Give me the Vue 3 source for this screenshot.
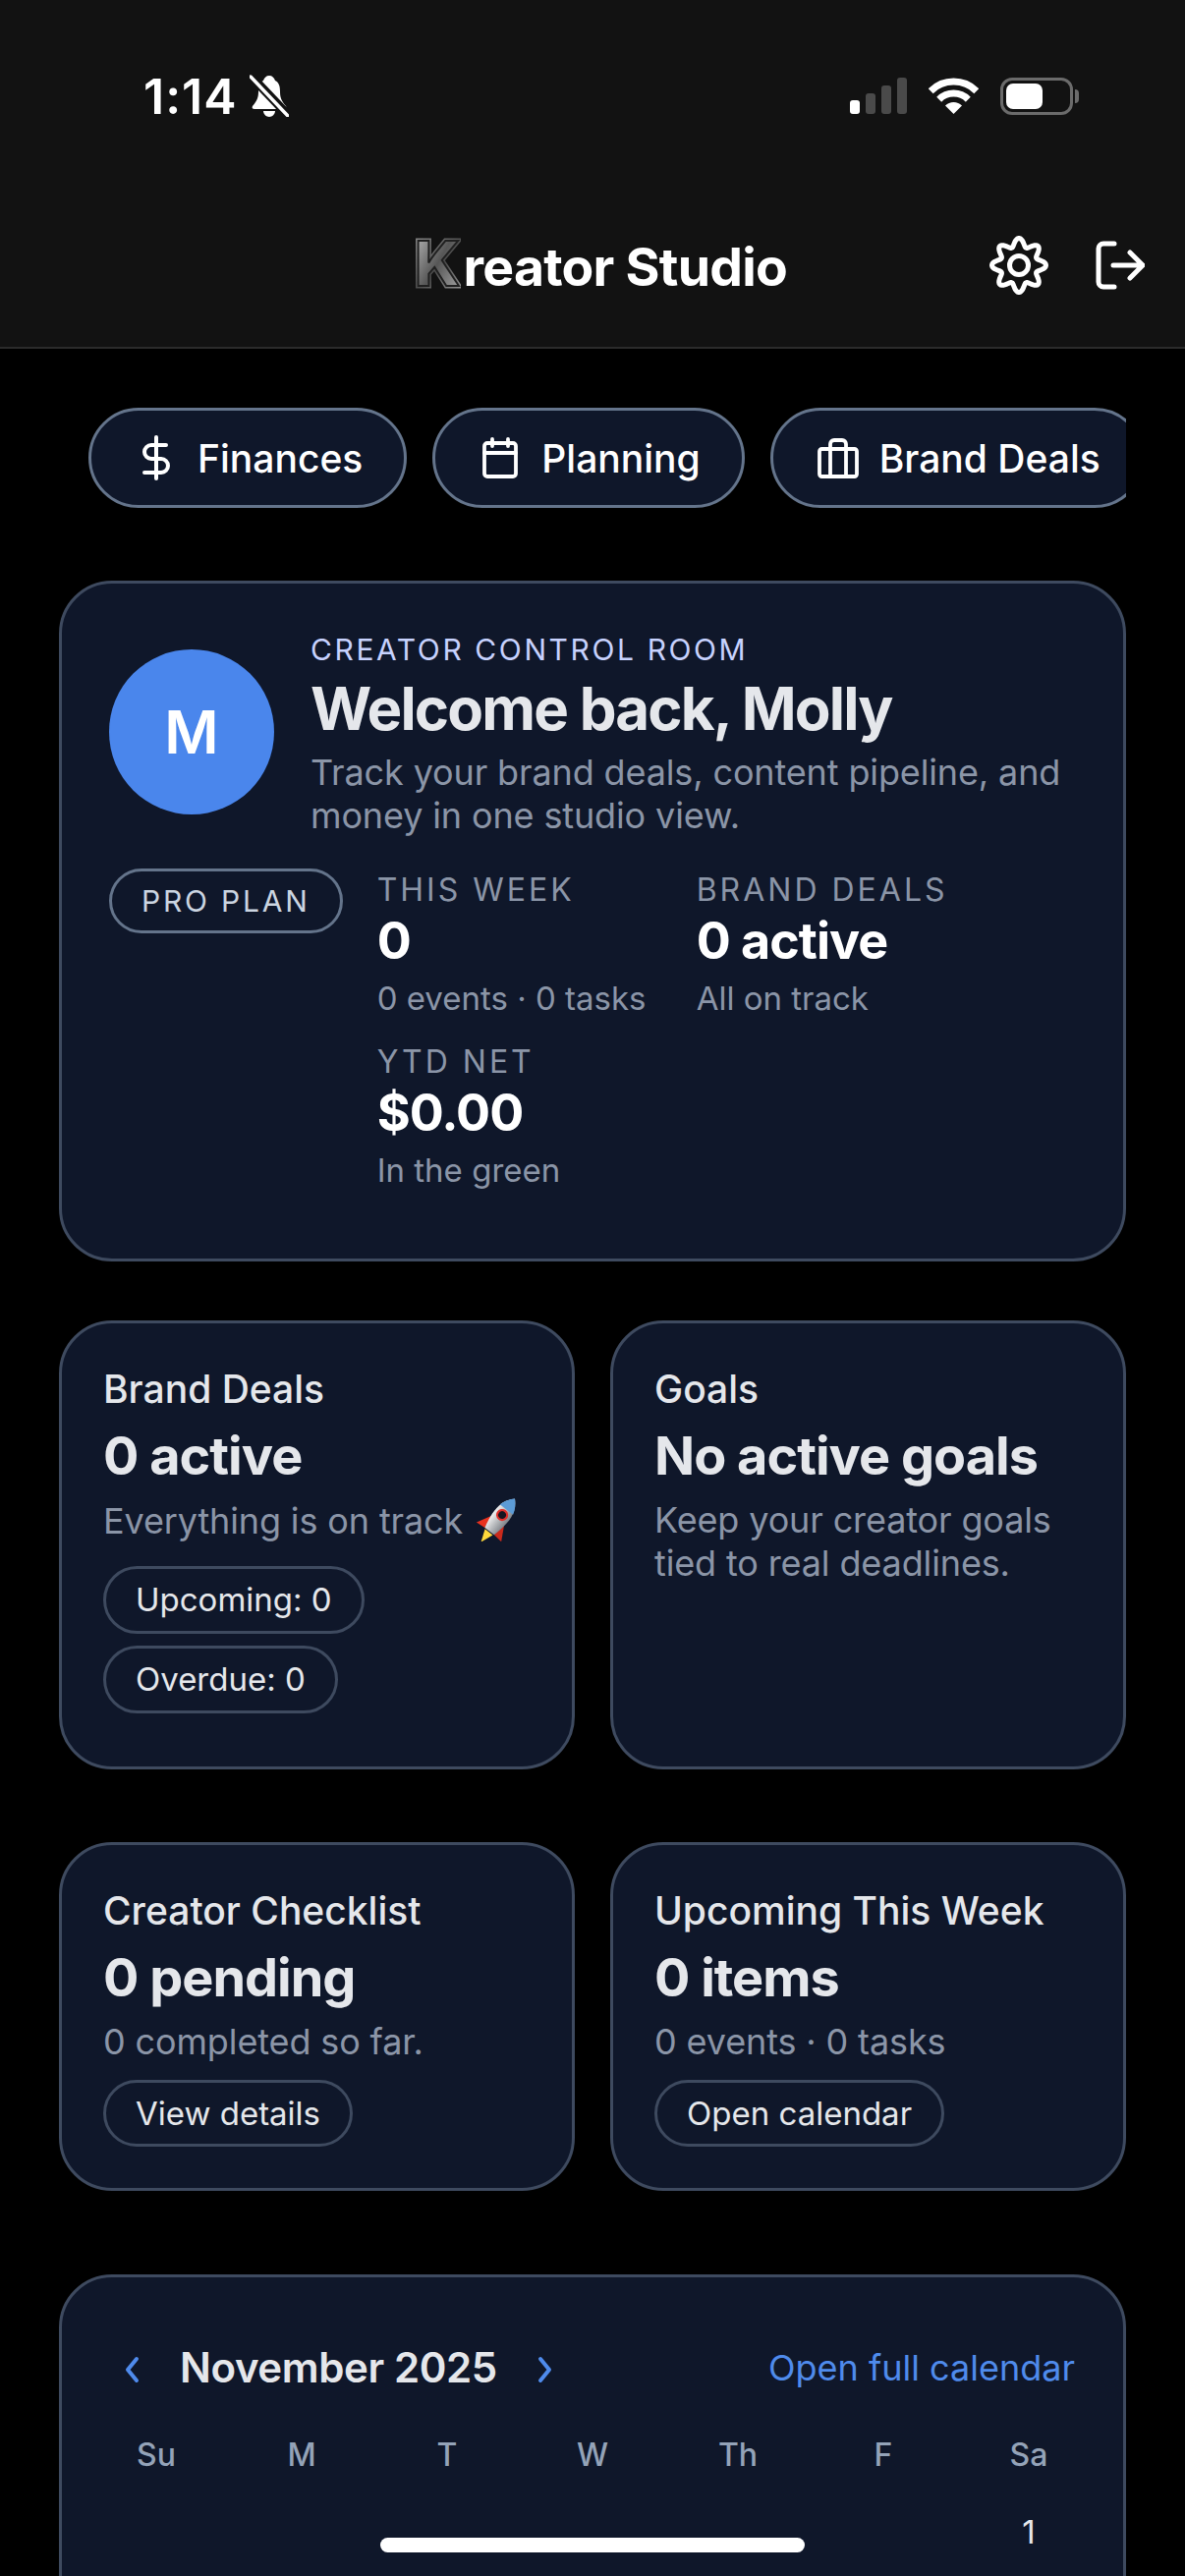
<script setup>
const tiles = [
  [
    { title: 'Brand Deals', value: '0 active', sub: 'Everything is on track', rocket: true, chips: ['Upcoming: 0', 'Overdue: 0'] },
    { title: 'Goals', value: 'No active goals', sub: 'Keep your creator goals tied to real deadlines.', chips: [] },
  ],
  [
    { title: 'Creator Checklist', value: '0 pending', sub: '0 completed so far.', link: 'View details' },
    { title: 'Upcoming This Week', value: '0 items', sub: '0 events · 0 tasks', link: 'Open calendar' },
  ],
];

const stats = [
  { label: 'THIS WEEK', value: '0', sub: '0 events · 0 tasks' },
  { label: 'BRAND DEALS', value: '0 active', sub: 'All on track' },
  { label: 'YTD NET', value: '$0.00', sub: 'In the green' },
];

const weekdays = ['Su', 'M', 'T', 'W', 'Th', 'F', 'Sa'];
// only the first week fits above the fold
const days = ['', '', '', '', '', '', 1];

// wavy outline for the settings cog
const gearPath = (() => {
  const pts = [];
  for (let i = 0; i < 160; i++) {
    const a = (i / 160) * Math.PI * 2;
    const r = 23.3 + 4.2 * Math.cos(8 * a);
    pts.push(`${(30 + r * Math.sin(a)).toFixed(2)} ${(30 - r * Math.cos(a)).toFixed(2)}`);
  }
  return `M${pts.join('L')}Z`;
})();
</script>

<template>
  <div class="screen">
    <header class="top">
      <div class="status">
        <div class="status-left">
          <span class="time">1:14</span>
          <svg class="bell" width="40" height="43" viewBox="0 0 40 43">
            <path d="M20 1c3 0 5 2 6 5 4 2 5 6 5 11 0 6 1 9 6 15 1 2 0 3-2 3H5c-2 0-3-1-2-3 5-6 6-9 6-15 0-5 1-9 5-11 1-3 3-5 6-5z" fill="#fff" />
            <path d="M14 37h12c0 3-3 6-6 6s-6-3-6-6z" fill="#fff" />
            <path d="M1 1l38 40" stroke="#121212" stroke-width="9" />
            <path d="M1 2l38 40" stroke="#fff" stroke-width="3.5" stroke-linecap="round" />
          </svg>
        </div>
        <div class="status-right">
          <div class="signal">
            <i class="on"></i><i></i><i></i><i></i>
          </div>
          <svg width="51" height="37" viewBox="0 0 51 37" fill="none">
            <path d="M2.2 13.7A33 33 0 0 1 48.8 13.7" stroke="#fff" stroke-width="7" />
            <path d="M10.7 22.2A21 21 0 0 1 40.3 22.2" stroke="#fff" stroke-width="7" />
            <path d="M25.5 37L17 28.5A12 12 0 0 1 34 28.5Z" fill="#fff" />
          </svg>
          <div class="battery"><span></span></div>
        </div>
      </div>
      <div class="brand-row">
        <h1 class="brand"><span class="logo-k" data-k="K">K</span>reator Studio</h1>
        <div class="actions">
          <svg width="60" height="60" viewBox="0 0 60 60" fill="none" stroke="#fff" stroke-width="5">
            <path :d="gearPath" stroke-linejoin="round" />
            <circle cx="30" cy="30" r="9.5" />
          </svg>
          <svg width="50" height="50" viewBox="0 0 50 50" fill="none" stroke="#fff" stroke-width="5" stroke-linecap="round" stroke-linejoin="round">
            <path d="M19 3H8a5 5 0 0 0-5 5v34a5 5 0 0 0 5 5h11" />
            <path d="M18 25h30M35 12l13 13-13 13" />
          </svg>
        </div>
      </div>
    </header>

    <main class="page">
      <nav class="pills">
        <a class="pill">
          <svg width="48" height="48" viewBox="0 0 24 24" fill="none" stroke="#fff" stroke-width="2" stroke-linecap="round" stroke-linejoin="round">
            <path d="M12 1.5v21M17 5.5H9.5a3.5 3.5 0 0 0 0 7h5a3.5 3.5 0 0 1 0 7H6" />
          </svg>
          Finances
        </a>
        <a class="pill">
          <svg width="48" height="48" viewBox="0 0 24 24" fill="none" stroke="#fff" stroke-width="1.9" stroke-linecap="round" stroke-linejoin="round">
            <rect x="4" y="4.5" width="16" height="17" rx="1.5" />
            <path d="M4 9.5h16M8 2.5v3.5M16 2.5v3.5" />
          </svg>
          Planning
        </a>
        <a class="pill">
          <svg width="48" height="48" viewBox="0 0 24 24" fill="none" stroke="#fff" stroke-width="1.9" stroke-linecap="round" stroke-linejoin="round">
            <rect x="2.5" y="7.5" width="19" height="14" rx="1.2" />
            <path d="M8 21.5V5a2 2 0 0 1 2-2h4a2 2 0 0 1 2 2v16.5" />
          </svg>
          Brand Deals
        </a>
      </nav>

      <section class="card hero">
        <div class="hero-top">
          <div class="avatar">M</div>
          <div class="hero-text">
            <div class="eyebrow">CREATOR CONTROL ROOM</div>
            <h2>Welcome back, Molly</h2>
            <p>Track your brand deals, content pipeline, and money in one studio view.</p>
          </div>
        </div>
        <div class="hero-bottom">
          <span class="plan">PRO PLAN</span>
          <div class="stats">
            <div v-for="s in stats" :key="s.label" class="stat">
              <div class="stat-label">{{ s.label }}</div>
              <div class="stat-value">{{ s.value }}</div>
              <div class="stat-sub">{{ s.sub }}</div>
            </div>
          </div>
        </div>
      </section>

      <section v-for="(row, i) in tiles" :key="i" class="tiles" :class="'tiles-' + i">
        <article v-for="t in row" :key="t.title" class="card tile">
          <div class="tile-title">{{ t.title }}</div>
          <div class="tile-value">{{ t.value }}</div>
          <p class="tile-sub">
            {{ t.sub }}
            <svg v-if="t.rocket" class="rocket" width="46" height="44" viewBox="0 0 46 44">
              <defs>
                <linearGradient id="rocketBody" x1="0" x2="1" y1="0" y2="0">
                  <stop offset="0" stop-color="#f2f2f2" />
                  <stop offset="1" stop-color="#7d8288" />
                </linearGradient>
              </defs>
              <g transform="translate(25 21) rotate(38)">
                <path d="M-5 17L0 30 5 17Z" fill="#ffd93b" />
                <path d="M-8 2L-16 17-6 16Z" fill="#e8321f" />
                <path d="M8 2L16 17 6 16Z" fill="#c92a1c" />
                <path d="M0 -26C10 -17 11 -4 6 16L-6 16C-11 -4 -10 -17 0 -26Z" fill="url(#rocketBody)" />
                <path d="M0 -26C5 -21 7 -17 8.5 -12L-8.5 -12C-7 -17 -5 -21 0 -26Z" fill="#5c9bd6" />
                <circle cx="0" cy="-5" r="5" fill="#15151f" stroke="#e0302a" stroke-width="2.2" />
              </g>
            </svg>
          </p>
          <div v-if="t.chips" class="chips">
            <span v-for="c in t.chips" :key="c" class="chip">{{ c }}</span>
          </div>
          <a v-if="t.link" class="chip chip-link">{{ t.link }}</a>
        </article>
      </section>

      <section class="card calendar">
        <div class="cal-head">
          <div class="cal-month">
            <svg class="chev" width="16" height="30" viewBox="0 0 16 30" fill="none" stroke="#4f8bec" stroke-width="4" stroke-linecap="round" stroke-linejoin="round">
              <path d="M13 4L4 15l9 11" />
            </svg>
            <span>November 2025</span>
            <svg class="chev" width="16" height="30" viewBox="0 0 16 30" fill="none" stroke="#4f8bec" stroke-width="4" stroke-linecap="round" stroke-linejoin="round">
              <path d="M3 4l9 11-9 11" />
            </svg>
          </div>
          <a class="cal-link">Open full calendar</a>
        </div>
        <div class="cal-grid">
          <div v-for="w in weekdays" :key="w" class="weekday">{{ w }}</div>
          <div v-for="(d, i) in days" :key="i" class="day">{{ d }}</div>
        </div>
      </section>
    </main>

    <div class="home-bar"></div>
  </div>
</template>

<style>
html,
body {
  background: #000;
}
</style>

<style scoped>
.screen {
  position: relative;
  width: 1206px;
  height: 2622px;
  overflow: hidden;
  background: #000;
  font-family: Inter, "Noto Sans", sans-serif;
  color: #e5e7eb;
}

.top {
  height: 355px;
  box-sizing: border-box;
  background: #121212;
  border-bottom: 2px solid #2b2b2b;
}

.status {
  display: flex;
  justify-content: space-between;
  align-items: center;
  height: 77px;
  padding: 59px 106px 0 146px;
}

.status-left {
  display: flex;
  align-items: center;
  gap: 12px;
}

.time {
  font-size: 50px;
  line-height: 60px;
  font-weight: 600;
  letter-spacing: 1px;
  color: #fff;
}

.status-right {
  display: flex;
  align-items: center;
  gap: 22px;
}

.signal {
  display: flex;
  align-items: flex-end;
  gap: 6px;
  height: 37px;
}

.signal i {
  width: 10px;
  border-radius: 3px;
  background: #4a4a4a;
}

.signal i:nth-child(1) {
  height: 14px;
}

.signal i:nth-child(2) {
  height: 21px;
}

.signal i:nth-child(3) {
  height: 29px;
}

.signal i:nth-child(4) {
  height: 37px;
}

.signal i.on {
  background: #fff;
}

.battery {
  position: relative;
  box-sizing: border-box;
  width: 74px;
  height: 38px;
  padding: 3px;
  border: 3px solid #6b6b6b;
  border-radius: 12px;
  margin-right: 8px;
}

.battery span {
  display: block;
  width: 37px;
  height: 100%;
  background: #fff;
  border-radius: 7px;
}

.battery::after {
  content: '';
  position: absolute;
  right: -9px;
  top: 9px;
  width: 4px;
  height: 14px;
  background: #6b6b6b;
  border-radius: 0 4px 4px 0;
}

.brand-row {
  display: flex;
  align-items: center;
  height: 90px;
  margin-top: 89px;
  padding: 0 41px 0 420px;
}

.brand {
  margin: 0;
  font-size: 53.5px;
  line-height: 60px;
  font-weight: 700;
  letter-spacing: -0.75px;
  color: #fff;
  white-space: nowrap;
}

.logo-k {
  position: relative;
  display: inline-block;
  margin: 0 3px 0 2px;
  font-size: 63px;
  font-weight: 800;
  letter-spacing: 0;
  color: transparent;
  -webkit-text-stroke: 5px transparent;
  background: linear-gradient(135deg, #8d8d8d, #4c4c4c 55%, #9b9b9b);
  -webkit-background-clip: text;
  background-clip: text;
}

.logo-k::after {
  content: attr(data-k);
  position: absolute;
  left: 0;
  top: 0;
  color: transparent;
  -webkit-text-stroke: 2px #202020;
  background: linear-gradient(120deg, #b8b8b8, #565656 50%, #a8a8a8);
  -webkit-background-clip: text;
  background-clip: text;
}

.actions {
  display: flex;
  align-items: center;
  gap: 48px;
  margin-left: auto;
}

.page {
  padding: 60px 60px 0;
}

.pills {
  display: flex;
  gap: 26px;
  padding-left: 30px;
  overflow: hidden;
}

.pill {
  flex: none;
  display: flex;
  align-items: center;
  gap: 18px;
  box-sizing: border-box;
  height: 102px;
  padding: 0 42px;
  border: 3px solid #64748b;
  border-radius: 51px;
  background: #0f172a;
  color: #fff;
  font-size: 39px;
  font-weight: 500;
}

.card {
  box-sizing: border-box;
  border: 3px solid #3e4a5f;
  border-radius: 54px;
  background: #0f172a;
}

.hero {
  height: 693px;
  margin-top: 74px;
  padding: 50px 48px 48px;
}

.hero-top {
  display: flex;
  align-items: center;
  gap: 37px;
}

.avatar {
  flex: none;
  display: flex;
  align-items: center;
  justify-content: center;
  width: 168px;
  height: 168px;
  margin-bottom: 6px;
  border-radius: 50%;
  background: #4a86ec;
  color: #fff;
  font-size: 60px;
  font-weight: 600;
}

.eyebrow {
  font-size: 30px;
  line-height: 34px;
  letter-spacing: 2.6px;
  color: #c7d2fe;
}

.hero-text h2 {
  margin: 13px 0;
  font-size: 60px;
  line-height: 60px;
  font-weight: 700;
  letter-spacing: -1.8px;
  color: #e5e7eb;
}

.hero-text p {
  margin: 0;
  font-size: 36px;
  line-height: 44px;
  letter-spacing: -0.13px;
  color: #8b95a7;
}

.hero-bottom {
  display: flex;
  align-items: flex-start;
  gap: 35px;
  margin-top: 32px;
}

.plan {
  flex: none;
  box-sizing: border-box;
  height: 66px;
  padding: 0 30px;
  border: 3px solid #64748b;
  border-radius: 33px;
  font-size: 30px;
  line-height: 60px;
  letter-spacing: 2.8px;
  color: #cbd5e1;
}

.stats {
  display: grid;
  grid-template-columns: 277px 277px;
  column-gap: 48px;
  row-gap: 28px;
  margin-top: 4px;
}

.stat-label {
  font-size: 32px;
  line-height: 36px;
  letter-spacing: 3px;
  color: #8b95a7;
}

.stat-value {
  margin-top: 4px;
  font-size: 52px;
  line-height: 60px;
  font-weight: 700;
  letter-spacing: -1px;
  color: #fff;
}

.stat-sub {
  margin-top: 9px;
  font-size: 33px;
  line-height: 38px;
  color: #8b95a7;
  white-space: nowrap;
}

.tiles {
  display: grid;
  grid-template-columns: 1fr 1fr;
  gap: 36px;
}

.tiles-0 {
  margin-top: 60px;
}

.tiles-1 {
  margin-top: 74px;
}

.tile {
  padding: 44px 42px 42px;
}

.tile-title {
  font-size: 39px;
  line-height: 46px;
  font-weight: 500;
  color: #e5e7eb;
}

.tile-value {
  margin-top: 13px;
  font-size: 54px;
  line-height: 64px;
  font-weight: 700;
  letter-spacing: -1px;
  color: #e5e7eb;
}

.tile-sub {
  margin: 11px 0 0;
  font-size: 36px;
  line-height: 44px;
  letter-spacing: -0.13px;
  color: #8b95a7;
}

.rocket {
  vertical-align: -8px;
  margin-left: 2px;
}

.chips {
  display: flex;
  flex-direction: column;
  align-items: flex-start;
  margin-top: 24px;
}

.chip {
  display: inline-block;
  box-sizing: border-box;
  height: 69px;
  margin-bottom: 12px;
  padding: 0 30px;
  border: 3px solid #3e4a5f;
  border-radius: 35px;
  font-size: 33px;
  line-height: 63px;
  color: #e5e7eb;
}

.chip-link {
  height: 68px;
  margin-top: 17px;
  margin-bottom: 0;
  line-height: 62px;
}

.calendar {
  height: 400px;
  margin-top: 85px;
  padding: 65px 49px 0 22px;
}

.cal-head {
  display: flex;
  align-items: center;
  justify-content: space-between;
}

.cal-month {
  display: flex;
  align-items: center;
  gap: 41px;
  margin-left: 41px;
  font-size: 42px;
  line-height: 54px;
  font-weight: 600;
  letter-spacing: -0.4px;
  color: #e5e7eb;
}

.chev {
  margin-top: 4px;
}

.cal-link {
  font-size: 36px;
  color: #4f8bec;
}

.cal-grid {
  display: grid;
  grid-template-columns: repeat(7, 148px);
  grid-template-rows: 59px 78px;
  margin-top: 42px;
}

.weekday {
  text-align: center;
  font-size: 32px;
  line-height: 40px;
  font-weight: 500;
  color: #94a3b8;
}

.day {
  text-align: center;
  font-size: 33px;
  line-height: 78px;
  color: #e5e7eb;
}

.home-bar {
  position: absolute;
  left: 387px;
  bottom: 24px;
  width: 432px;
  height: 15px;
  border-radius: 8px;
  background: #fff;
}
</style>
